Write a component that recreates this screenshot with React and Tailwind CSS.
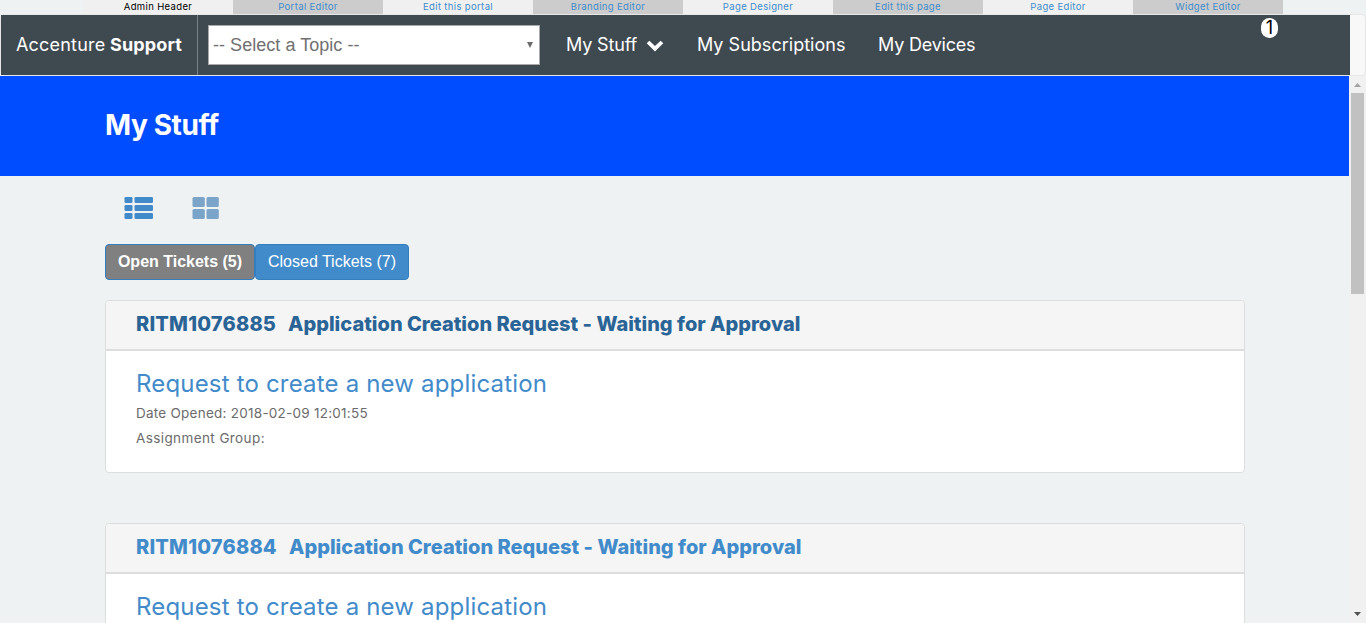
const adminTabs = [
  'Admin Header',
  'Portal Editor',
  'Edit this portal',
  'Branding Editor',
  'Page Designer',
  'Edit this page',
  'Page Editor',
  'Widget Editor',
];

const tickets = [
  { id: 'RITM1076885', hovered: true },
  { id: 'RITM1076884', hovered: false },
];

function AdminBar() {
  return (
    <div className="flex h-[14px] shrink-0 pl-[83px]">
      {adminTabs.map((label, i) => (
        <div
          key={label}
          className={`h-[14px] w-[150px] text-center text-[9.5px] leading-[13px] tracking-[0.35px] ${
            i % 2 ? 'bg-[#cccccc]' : 'bg-[#f0f0f0]'
          } ${i === 0 ? 'text-black' : 'text-[#428bca]'}`}
        >
          {label}
        </div>
      ))}
    </div>
  );
}

function NavBar() {
  return (
    <nav className="h-[62px] shrink-0 rounded border border-[#e7e7e7] bg-[#f8f8f8]">
      <div className="flex h-[60px] w-[1349px] bg-[#3f4950] text-white">
        <div className="flex w-[197px] items-center border-r border-[#7c8286] pl-[15px] text-[18px] leading-[60px] whitespace-nowrap">
          <span className="w-[94px] tracking-[0.2px]">Accenture</span>
          <span className="font-bold tracking-[0.15px]">Support</span>
        </div>
        <div className="mt-[10px] ml-[10px] flex h-[40px] w-[332px] items-center justify-between border border-[#a9a9a9] bg-white pr-[6px] pl-1 font-['Liberation_Sans',sans-serif] text-[18px] text-[#707070]">
          <span className="tracking-[0.04px]">-- Select a Topic --</span>
          <svg width="6" height="6" viewBox="0 0 6 6">
            <path d="M0 0h6L3 6z" fill="#6b6b6b" />
          </svg>
        </div>
        <div className="ml-[26px] flex h-[60px] w-[131px] items-center text-[18px] leading-[60px] whitespace-nowrap">
          <span className="w-[80px] tracking-[-0.15px]">My Stuff</span>
          <svg width="18" height="12" viewBox="0 0 18 12" className="mt-[2px]">
            <path d="M0.7 3.2 3.4.7 9 6.1 14.6.7l2.7 2.5L9 11.5z" fill="white" />
          </svg>
        </div>
        <span className="w-[181px] text-[18px] leading-[60px] tracking-[0.02px] whitespace-nowrap">My Subscriptions</span>
        <span className="text-[18px] leading-[60px] tracking-[-0.2px] whitespace-nowrap">My Devices</span>
        <span className="mt-[3px] mr-[72px] ml-auto h-5 w-[17px] rounded-full bg-white text-center text-[18px] leading-5 text-black">
          1
        </span>
      </div>
    </nav>
  );
}

function ViewToggle() {
  return (
    <div className="flex h-[68px] pt-[21px] pl-[19px]">
      <svg width="29" height="22" viewBox="0 0 29 22" fill="#428bca">
        {[0, 8, 16].map((y) => (
          <g key={y}>
            <rect x="0.5" y={y} width="8" height="6" rx="1.3" />
            <rect x="10.500" y={y} width="18.500" height="6" rx="1.3" />
          </g>
        ))}
      </svg>
      <svg width="27" height="22" viewBox="0 0 27 22" fill="#7ba4c9" className="ml-[39px]">
        <rect x="0.5" y="0" width="12.300" height="10" rx="1.5" />
        <rect x="14.500" y="0" width="12.300" height="10" rx="1.5" />
        <rect x="0.5" y="12" width="12.300" height="10" rx="1.5" />
        <rect x="14.500" y="12" width="12.300" height="10" rx="1.5" />
      </svg>
    </div>
  );
}

function Ticket({ id, hovered }) {
  return (
    <article className="mb-[50px] h-[173px] shrink-0 rounded border border-[#dddddd] bg-white">
      <header
        className={`flex h-[50px] rounded-t border-b-2 border-[#dddddd] bg-[#f5f5f5] pl-[30px] text-[20px] leading-[46px] font-extrabold whitespace-nowrap ${
          hovered ? 'text-[#2a6496]' : 'text-[#428bca]'
        }`}
      >
        <span className={`tracking-[0.2px] ${hovered ? 'w-[152px]' : 'w-[153px]'}`}>{id}</span>
        <span className="tracking-[0.01px]">Application Creation Request - Waiting for Approval</span>
      </header>
      <div className="pt-[15px] pl-[30px] whitespace-nowrap">
        <h2 className="text-[24px] leading-9 font-normal tracking-[0.18px] text-[#428bca]">
          Request to create a new application
        </h2>
        <div className="-mt-px text-[13.5px] leading-[25px] text-[#6b6b6b]">
          <p className="tracking-[0.25px]">Date Opened: 2018-02-09 12:01:55</p>
          <p className="tracking-[0.4px]">Assignment Group:</p>
        </div>
      </div>
    </article>
  );
}

function ScrollBar() {
  return (
    <div className="flex w-[17px] shrink-0 flex-col items-center bg-[#f1f1f1]">
      <svg width="17" height="17" viewBox="0 0 17 17" className="shrink-0">
        <path d="M5 11h7L8.500 7z" fill="#a3a3a3" />
      </svg>
      <div className="h-[201px] w-[13px] bg-[#c1c1c1]" />
      <svg width="17" height="17" viewBox="0 0 17 17" className="mt-auto shrink-0">
        <path d="M5 6h7L8.500 10z" fill="#505050" />
      </svg>
    </div>
  );
}

export default function App() {
  return (
    <div className="flex h-[623px] w-[1366px] flex-col overflow-hidden bg-[#eef2f3] font-['Inter',sans-serif]">
      <AdminBar />
      <NavBar />
      <div className="flex min-h-0 flex-1">
        <main className="flex w-[1349px] flex-col overflow-hidden">
          <div className="h-[100px] shrink-0 bg-[#004dff] pl-[105px]">
            <h1 className="text-[28px] leading-[98px] font-bold tracking-[-0.4px] text-white">My Stuff</h1>
          </div>
          <div className="ml-[105px] flex w-[1140px] flex-col">
            <ViewToggle />
            <div className="mb-5 flex h-9 font-['Liberation_Sans',sans-serif] text-[16px] leading-[34px] whitespace-nowrap text-white">
              <button className="w-[150px] rounded border border-[#357ebd] bg-[#808080] font-bold">Open Tickets (5)</button>
              <button className="w-[154px] rounded border border-[#357ebd] bg-[#428bca]">Closed Tickets (7)</button>
            </div>
            {tickets.map((t) => (
              <Ticket key={t.id} {...t} />
            ))}
          </div>
        </main>
        <ScrollBar />
      </div>
    </div>
  );
}
